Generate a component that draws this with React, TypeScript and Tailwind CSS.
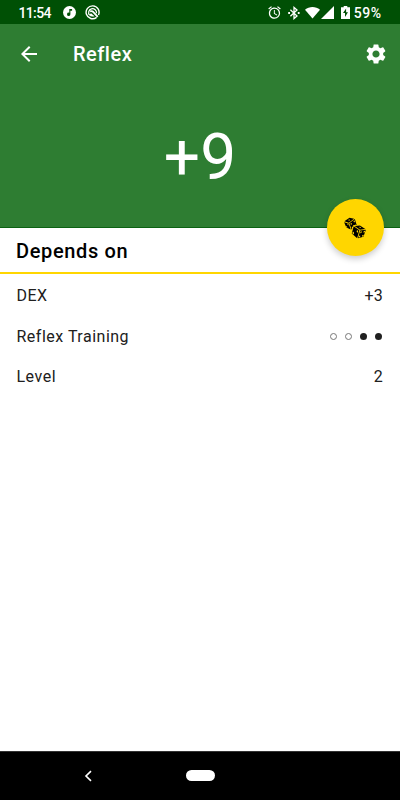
import React from "react";
import { GiRollingDices } from "react-icons/gi";
import { MdAlarm, MdArrowBack, MdSettings } from "react-icons/md";

function StatusBar() {
  return (
    <div className="flex h-6 shrink-0 items-center bg-[#005005] pt-[1px] pl-[18.5px] pr-[18.5px] text-white">
      <span className="w-[44.5px] text-[14px] leading-6 font-medium tracking-[-0.65px]">11:54</span>
      <svg className="h-[13px] w-[13px]" viewBox="0 0 13 13">
        <circle cx="6.5" cy="6.5" r="6.5" fill="#fff" />
        <path d="M6.3 3h2.8v1.8H7.4v3.5a1.7 1.7 0 1 1-1.1-1.5z" fill="#005005" />
      </svg>
      <svg className="ml-[8.5px] h-[15px] w-[15px]" viewBox="0 0 16 16" fill="none" stroke="#fff">
        <path d="M12.4 13.2A6.9 6.9 0 1 1 14.4 10.6" strokeWidth="1.5" />
        <path d="M4.9 10.9A4.2 4.2 0 1 1 12.2 8.8" strokeWidth="1.3" />
        <path d="M5.4 6.8Q7.6 5.8 9 7.6L13.6 12.6" strokeWidth="1.9" />
        <path d="M4.4 10.6Q6.4 13.2 10.2 12L6.4 8.9z" fill="#fff" stroke="none" />
      </svg>
      <div className="ml-auto flex items-center">
        <MdAlarm className="h-[15px] w-[15px]" />
        <svg className="ml-[4.5px] h-[14px] w-[14px]" viewBox="0 0 14 14" fill="none" stroke="#fff" strokeWidth="1.3">
          <path d="M3.4 3.8L10 10 7 12.6V1.4L10 4 3.4 10.2" />
          <path d="M1.2 7h1.8M10.8 7h1.8" strokeWidth="1.8" />
        </svg>
        <svg className="ml-[4.5px] h-[13px] w-[15px]" viewBox="0 0 16 13">
          <path d="M0 3.5C4.5-.4 11.5-.4 16 3.5L8 13z" fill="#fff" />
        </svg>
        <svg className="ml-[1px] h-[13px] w-[13px]" viewBox="0 0 13 13">
          <path d="M0 13L13 0v13z" fill="#fff" />
        </svg>
        <svg className="ml-[6.5px] h-[13px] w-[9px]" viewBox="0 0 9 13">
          <path d="M2.7 0h3.6v1.3H9V13H0V1.3h2.7z" fill="#fff" />
          <path d="M5.1 2.5L2 7.1h2v3.8l3-4.6H5.1z" fill="#005005" />
        </svg>
        <span className="ml-[4px] text-[14px] leading-6 font-medium tracking-[0.5px]">59%</span>
      </div>
    </div>
  );
}

function Row({ label, children }: { label: string; children: React.ReactNode }) {
  return (
    <div className="flex h-[40.6px] items-center justify-between pr-[17px] pl-[16.5px] text-[16px] tracking-[0.5px] text-[#202020]">
      <span>{label}</span>
      {children}
    </div>
  );
}

function Dots() {
  return (
    <div className="flex gap-[8px] pr-[1px] pb-[1px]">
      <i className="h-[7px] w-[7px] rounded-full border border-[#777]" />
      <i className="h-[7px] w-[7px] rounded-full border border-[#777]" />
      <i className="h-[7px] w-[7px] rounded-full bg-[#202020]" />
      <i className="h-[7px] w-[7px] rounded-full bg-[#202020]" />
    </div>
  );
}

export default function App() {
  return (
    <div className="flex h-[800px] w-[400px] flex-col overflow-hidden bg-white font-['Roboto',sans-serif]">
      <StatusBar />
      <header className="relative flex h-[204px] shrink-0 flex-col border-b border-[#0b6212] bg-[#2e7d32] text-white">
        <div className="flex h-[59px] items-center pr-[12.5px] pl-[16.5px]">
          <MdArrowBack className="h-6 w-6" />
          <h1 className="ml-[32.5px] text-[20px] font-medium tracking-[0.5px]">Reflex</h1>
          <MdSettings className="ml-auto h-6 w-6" />
        </div>
        <div className="flex h-[144px] items-center justify-center pt-[6px] text-[64px] leading-none">+9</div>
        <button className="absolute top-[175px] right-[16px] flex h-[57px] w-[57px] items-center justify-center rounded-full bg-[#ffd600] pr-[1.5px] text-black shadow-[0_3px_6px_rgba(0,0,0,0.2)]">
          <GiRollingDices className="h-[24px] w-[24px]" />
        </button>
      </header>
      <h2 className="h-[46px] shrink-0 border-b-2 border-[#ffd600] pl-4 text-[20px] leading-[46px] font-medium tracking-[0.65px] text-black">
        Depends on
      </h2>
      <main className="flex-1 pt-[2px]">
        <Row label="DEX"><span className="tracking-[0.2px]">+3</span></Row>
        <Row label="Reflex Training"><Dots /></Row>
        <Row label="Level"><span className="tracking-[0.2px]">2</span></Row>
      </main>
      <nav className="flex h-[49px] shrink-0 items-center border-t border-[#333] bg-black pl-[84px]">
        <svg className="h-[12px] w-[8px]" viewBox="0 0 8 12" fill="none" stroke="#fff" strokeWidth="1.6">
          <path d="M7 1.2L2 6l5 4.8" />
        </svg>
        <div className="mb-[1px] ml-[94px] h-[11px] w-[29px] rounded-full bg-white" />
      </nav>
    </div>
  );
}
